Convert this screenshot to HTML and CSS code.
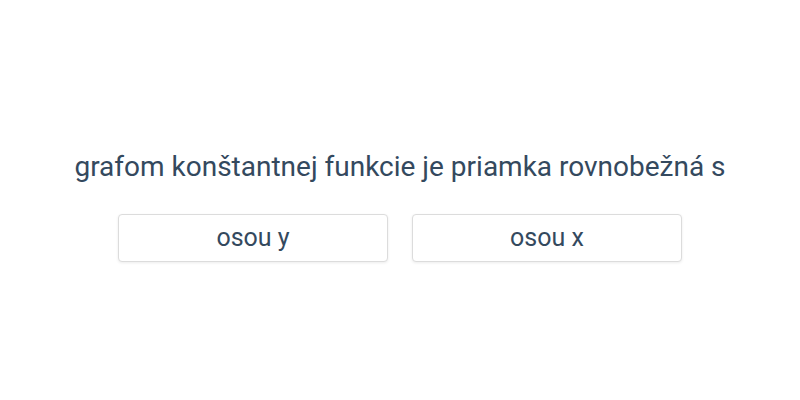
FILE: index.html
```html
<!DOCTYPE html>
<html lang="sk">
<head>
<meta charset="utf-8">
<link rel="stylesheet" href="styles.css">
</head>
<body>
<main class="quiz">
  <p class="question">grafom konštantnej funkcie je priamka rovnobežná s</p>
  <div class="answers">
    <button class="answer">osou y</button>
    <button class="answer">osou x</button>
  </div>
</main>
</body>
</html>
```

FILE: styles.css
```css
html, body {
  margin: 0;
  padding: 0;
  background: #fff;
}
body {
  width: 800px;
  height: 400px;
  font-family: Roboto, "Liberation Sans", sans-serif;
  color: #34495e;
}
.quiz {
  height: 400px;
  box-sizing: border-box;
  padding-top: 12px;
  display: flex;
  flex-direction: column;
  align-items: center;
  justify-content: center;
}
.question {
  margin: 0 0 31px;
  padding-top: 1px;
  font-size: 28px;
  line-height: 32px;
  text-align: center;
}
.answers {
  display: flex;
  gap: 24px;
}
.answer {
  width: 270px;
  height: 48px;
  box-sizing: border-box;
  background: #fff;
  border: 1px solid #dcdcdc;
  border-radius: 4px;
  box-shadow: 0 1px 3px rgba(0,0,0,0.08);
  font-family: inherit;
  font-size: 25px;
  color: #34495e;
  padding: 0 0 2px;
}
```
